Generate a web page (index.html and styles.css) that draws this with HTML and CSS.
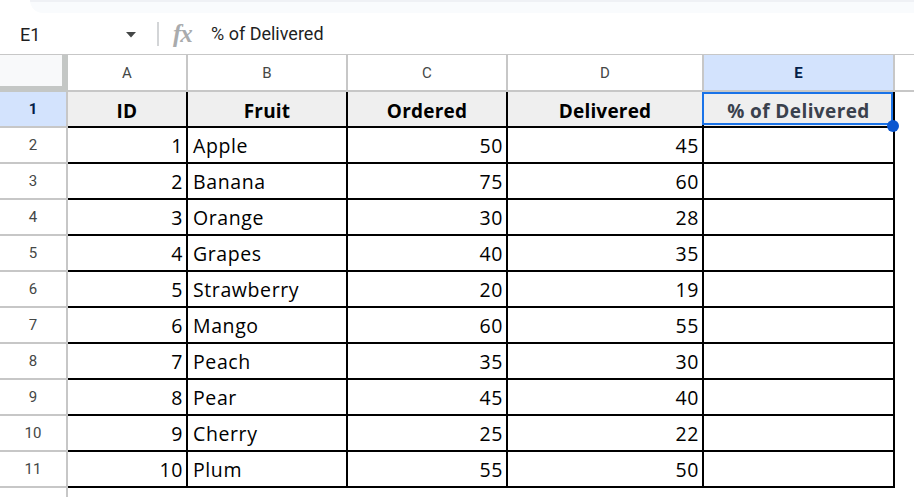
FILE: index.html
```html
<!DOCTYPE html>
<html>
<head>
<meta charset="utf-8">
<link rel="stylesheet" href="styles.css">
</head>
<body>
<div class="topbar"><div class="topbar-inner"></div></div>
<div class="formula-bar">
  <div class="namebox">
    <span class="name">E1</span>
    <svg class="caret" width="10" height="6" viewBox="0 0 10 6"><path d="M0 0 L10 0 L5 5.5 Z" fill="#444746"/></svg>
  </div>
  <div class="sep"></div>
  <span class="fx">fx</span>
  <span class="formula">% of Delivered</span>
</div>
<div class="sheet">
  <div class="corner"></div>
  <div class="colhead">A</div>
  <div class="colhead">B</div>
  <div class="colhead">C</div>
  <div class="colhead">D</div>
  <div class="colhead sel">E</div>
  <div class="colhead last"></div>

  <div class="rowhead sel">1</div>
  <div class="cell hdr">ID</div>
  <div class="cell hdr">Fruit</div>
  <div class="cell hdr">Ordered</div>
  <div class="cell hdr">Delivered</div>
  <div class="cell hdr active">% of Delivered</div>
  <div class="blank"></div>

  <div class="rowhead">2</div><div class="cell num">1</div><div class="cell">Apple</div><div class="cell num">50</div><div class="cell num">45</div><div class="cell"></div><div class="blank"></div>
  <div class="rowhead">3</div><div class="cell num">2</div><div class="cell">Banana</div><div class="cell num">75</div><div class="cell num">60</div><div class="cell"></div><div class="blank"></div>
  <div class="rowhead">4</div><div class="cell num">3</div><div class="cell">Orange</div><div class="cell num">30</div><div class="cell num">28</div><div class="cell"></div><div class="blank"></div>
  <div class="rowhead">5</div><div class="cell num">4</div><div class="cell">Grapes</div><div class="cell num">40</div><div class="cell num">35</div><div class="cell"></div><div class="blank"></div>
  <div class="rowhead">6</div><div class="cell num">5</div><div class="cell">Strawberry</div><div class="cell num">20</div><div class="cell num">19</div><div class="cell"></div><div class="blank"></div>
  <div class="rowhead">7</div><div class="cell num">6</div><div class="cell">Mango</div><div class="cell num">60</div><div class="cell num">55</div><div class="cell"></div><div class="blank"></div>
  <div class="rowhead">8</div><div class="cell num">7</div><div class="cell">Peach</div><div class="cell num">35</div><div class="cell num">30</div><div class="cell"></div><div class="blank"></div>
  <div class="rowhead">9</div><div class="cell num">8</div><div class="cell">Pear</div><div class="cell num">45</div><div class="cell num">40</div><div class="cell"></div><div class="blank"></div>
  <div class="rowhead">10</div><div class="cell num">9</div><div class="cell">Cherry</div><div class="cell num">25</div><div class="cell num">22</div><div class="cell"></div><div class="blank"></div>
  <div class="rowhead">11</div><div class="cell num">10</div><div class="cell">Plum</div><div class="cell num">55</div><div class="cell num">50</div><div class="cell"></div><div class="blank"></div>

  <div class="rowhead"></div><div class="blank"></div><div class="blank"></div><div class="blank"></div><div class="blank"></div><div class="blank"></div><div class="blank"></div>
</div>
</body>
</html>
```

FILE: styles.css
```css
html, body {
  margin: 0;
  padding: 0;
  background: #ffffff;
  overflow: hidden;
}
body {
  width: 914px;
  height: 497px;
  font-family: Roboto, "Liberation Sans", sans-serif;
}
.topbar {
  height: 14px;
}
.topbar-inner {
  margin-left: 30px;
  height: 13px;
  background: #f9fbfd;
  border-top: 2px solid #eff1f5;
  border-bottom-left-radius: 16px;
  box-sizing: border-box;
}
.formula-bar {
  height: 40px;
  border-bottom: 1px solid #c7c7c7;
  display: flex;
  align-items: center;
}
.namebox {
  width: 146px;
  box-sizing: border-box;
  padding: 0 10px 0 20px;
  display: flex;
  align-items: center;
  justify-content: space-between;
}
.name {
  font-size: 18px;
  color: #1f1f1f;
}
.caret {
  display: block;
  margin-top: 2px;
}
.sep {
  width: 2px;
  height: 24px;
  background: #d3d5d7;
  margin-left: 11px;
}
.fx {
  margin-left: 14px;
  width: 26px;
  font-family: "Liberation Serif", serif;
  font-style: italic;
  font-weight: bold;
  font-size: 25px;
  line-height: 1;
  color: #a9abad;
  letter-spacing: -1px;
  margin-top: -2px;
}
.formula {
  margin-left: 12px;
  font-size: 18px;
  color: #1f1f1f;
  margin-top: -2px;
}
.sheet {
  display: grid;
  grid-template-columns: 68px 120px 160px 160px 196px 191px 1fr;
  grid-template-rows: 37px;
  grid-auto-rows: 36px;
}
.corner {
  background: #f8f9fa;
  border-right: 6px solid #c4c7c5;
  border-bottom: 6px solid #c4c7c5;
}
.colhead {
  box-sizing: border-box;
  border-right: 2px solid #c7c7c7;
  border-bottom: 2px solid #c7c7c7;
  display: flex;
  align-items: center;
  justify-content: center;
  font-size: 15px;
  color: #444746;
}
.colhead.sel {
  background: #d3e3fd;
  color: #041e49;
  font-weight: bold;
}
.colhead.last {
  border-right: none;
}
.rowhead {
  box-sizing: border-box;
  border-right: 2px solid #c7c7c7;
  border-bottom: 2px solid #c7c7c7;
  display: flex;
  align-items: center;
  justify-content: center;
  font-size: 15px;
  color: #444746;
}
.rowhead.sel {
  background: #d3e3fd;
  color: #041e49;
  font-weight: bold;
}
.cell {
  box-sizing: border-box;
  border-right: 2px solid #000;
  border-bottom: 2px solid #000;
  display: flex;
  align-items: flex-end;
  padding: 0 3px 3px 5px;
  font-family: "Open Sans", "Noto Sans", sans-serif;
  font-size: 19.5px;
  letter-spacing: 0.6px;
  color: #000;
  white-space: nowrap;
  overflow: visible;
}
.cell.num {
  justify-content: flex-end;
}
.cell.hdr {
  background: #efefef;
  font-weight: bold;
  justify-content: center;
  align-items: center;
  padding: 3px 0 0 0;
  font-size: 19px;
  letter-spacing: 0.2px;
}
.cell.active {
  position: relative;
  color: #3a414d;
  letter-spacing: 0.4px;
}
.cell.active::after {
  content: "";
  position: absolute;
  left: -2px;
  top: 0;
  right: 0;
  bottom: 1px;
  border: 2px solid #1a73e8;
}
.cell.active::before {
  content: "";
  position: absolute;
  right: -6px;
  bottom: -6px;
  width: 12px;
  height: 12px;
  border-radius: 50%;
  background: #0b57d0;
  z-index: 2;
}
.blank {
  background: #fff;
}
```
